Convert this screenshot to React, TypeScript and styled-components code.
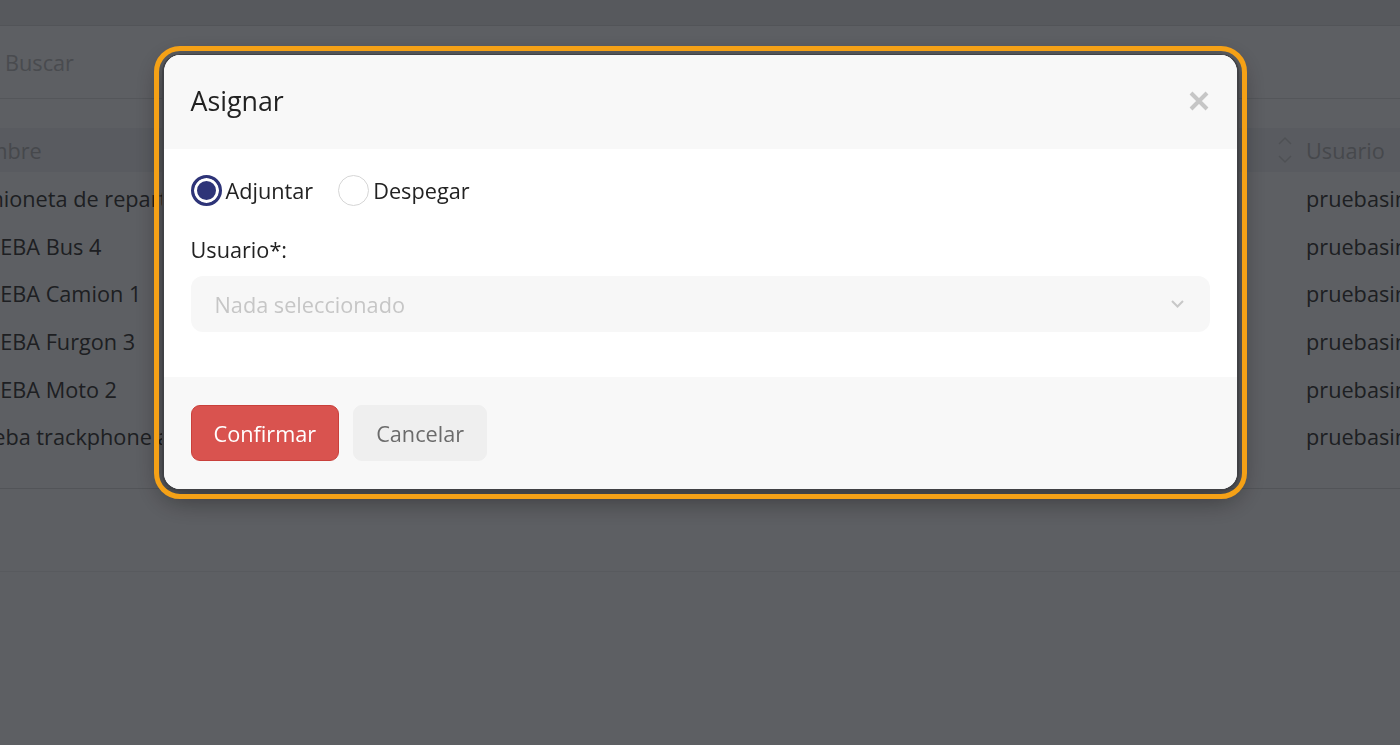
import React from 'react';
import styled, { createGlobalStyle } from 'styled-components';

const GlobalStyle = createGlobalStyle`
  html, body {
    margin: 0;
    padding: 0;
    height: 100%;
    overflow: hidden;
    background: #e9edf7;
    font-family: 'Open Sans', 'Liberation Sans', sans-serif;
  }
  #root {
    height: 100%;
  }
`;

const vehicles = [
  'Camioneta de reparto',
  'PRUEBA Bus 4',
  'PRUEBA Camion 1',
  'PRUEBA Furgon 3',
  'PRUEBA Moto 2',
  'Prueba trackphone android',
];

const Page = styled.div`
  height: 100%;
  display: flex;
  flex-direction: column;
  overflow: hidden;
  background: #e9edf7;
`;

const TopBar = styled.div`
  height: 25px;
  flex-shrink: 0;
  background: #d9dee8;
  border-bottom: 1px solid #cdd2dc;
`;

// the list is scrolled sideways, so its first column starts off screen
const Sheet = styled.div`
  margin-left: -71px;
  width: calc(100% + 71px);
  display: flex;
  flex-direction: column;
`;

const SearchRow = styled.div`
  height: 72px;
  display: flex;
  align-items: center;
  padding-left: 76px;
  border-bottom: 1px solid #d3d8e2;
  font-size: 21.7px;
  color: #b6bbc5;
`;

const TableGrid = styled.div`
  margin-top: 29px;
  display: grid;
  grid-template-columns: 1348px 1fr;
  padding-bottom: 27px;
  border-bottom: 1px solid #cdd2dc;
`;

const HeadCell = styled.div`
  height: 44px;
  margin-bottom: 3px;
  display: flex;
  align-items: center;
  gap: 13px;
  background: #dfe4f0;
  color: #afb4be;
  font-size: 21.7px;
  white-space: nowrap;
`;

const Cell = styled.div`
  height: 47.6px;
  display: flex;
  align-items: center;
  padding-left: 29px;
  font-size: 21.7px;
  color: #4b4e55;
  white-space: nowrap;
  overflow: hidden;
`;

const Pager = styled.div`
  height: 82px;
  border-bottom: 1px solid #dde2ec;
`;

const SortIcon = () => (
  <svg width="16" height="28" viewBox="0 0 16 28" fill="none" stroke="#c3c8d2" strokeWidth="1.5">
    <path d="M2 8 L8 2 L14 8" />
    <path d="M2 20 L8 26 L14 20" />
  </svg>
);

const Backdrop = styled.div`
  position: fixed;
  inset: 0;
  background: rgba(0, 0, 0, 0.6);
  display: flex;
  justify-content: center;
  align-items: flex-start;
  padding-top: 54px;
`;

const Dialog = styled.div`
  width: 1077px;
  box-sizing: border-box;
  border: 2px solid #404145;
  border-top-width: 1px;
  border-radius: 18px;
  outline: 5px solid #f5a116;
  outline-offset: 3px;
  overflow: hidden;
  background: #fff;
  box-shadow: 0 8px 28px rgba(0, 0, 0, 0.45);
  color: #222;
`;

const Header = styled.div`
  height: 94px;
  box-sizing: border-box;
  display: flex;
  align-items: center;
  justify-content: space-between;
  padding: 0 27px 3px;
  background: #f8f8f8;
`;

const Title = styled.h4`
  margin: 0;
  font-size: 26.8px;
  font-weight: 400;
  color: #222;
`;

const CloseButton = styled.button`
  border: 0;
  background: none;
  padding: 0;
  width: 22px;
  height: 22px;
  display: grid;
  place-items: center;
  cursor: pointer;
`;

const Body = styled.div`
  padding: 24px 27px 45px;
  display: flex;
  flex-direction: column;
`;

const RadioGroup = styled.div`
  display: flex;
  align-items: center;
  gap: 25px;
  height: 34px;
`;

const RadioLabel = styled.label`
  display: flex;
  align-items: center;
  gap: 4px;
  font-size: 21.7px;
  color: #222;
  cursor: pointer;
`;

const RadioDot = styled.span<{ $checked?: boolean }>`
  width: 31px;
  height: 31px;
  box-sizing: border-box;
  border-radius: 50%;
  border: ${(p) => (p.$checked ? '3px solid #2e3478' : '1.5px solid #d6d6d6')};
  background: ${(p) => (p.$checked ? '#2e3478' : '#fff')};
  box-shadow: ${(p) => (p.$checked ? 'inset 0 0 0 3px #fff' : 'none')};
`;

const FieldLabel = styled.div`
  margin-top: 29px;
  font-size: 21.7px;
  color: #222;
  line-height: 28px;
`;

const Select = styled.div`
  margin-top: 12px;
  height: 56px;
  border-radius: 12px;
  background: #f7f7f7;
  display: flex;
  align-items: center;
  justify-content: space-between;
  padding: 0 26px 0 24px;
  font-size: 21.7px;
  color: #c6c6c6;
`;

const Footer = styled.div`
  height: 112px;
  box-sizing: border-box;
  display: flex;
  align-items: center;
  gap: 14px;
  padding: 0 27px;
  background: #f8f8f8;
`;

const Button = styled.button<{ $primary?: boolean }>`
  height: 56px;
  padding: 0 22px;
  border-radius: 9px;
  font-family: inherit;
  font-size: 21.7px;
  cursor: pointer;
  border: 1px solid ${(p) => (p.$primary ? '#c9403b' : '#efefef')};
  background: ${(p) => (p.$primary ? '#d9534f' : '#efefef')};
  color: ${(p) => (p.$primary ? '#fff' : '#6b6b6b')};
`;

export default function App() {
  const [mode, setMode] = React.useState<'adjuntar' | 'despegar'>('adjuntar');

  return (
    <>
      <GlobalStyle />
      <Page>
        <TopBar />
        <Sheet>
          <SearchRow>Buscar</SearchRow>
          <TableGrid>
            <HeadCell>
              <SortIcon />
              Nombre
            </HeadCell>
            <HeadCell>
              <SortIcon />
              Usuario
            </HeadCell>
            {vehicles.map((name) => (
              <React.Fragment key={name}>
                <Cell>{name}</Cell>
                <Cell>pruebasinergia</Cell>
              </React.Fragment>
            ))}
          </TableGrid>
          <Pager />
        </Sheet>
      </Page>

      <Backdrop>
        <Dialog>
          <Header>
            <Title>Asignar</Title>
            <CloseButton aria-label="Cerrar">
              <svg width="20" height="20" viewBox="0 0 20 20" stroke="#c6c6c6" strokeWidth="4">
                <path d="M2 2 L18 18 M18 2 L2 18" />
              </svg>
            </CloseButton>
          </Header>
          <Body>
            <RadioGroup>
              <RadioLabel onClick={() => setMode('adjuntar')}>
                <RadioDot $checked={mode === 'adjuntar'} />
                Adjuntar
              </RadioLabel>
              <RadioLabel onClick={() => setMode('despegar')}>
                <RadioDot $checked={mode === 'despegar'} />
                Despegar
              </RadioLabel>
            </RadioGroup>
            <FieldLabel>Usuario*:</FieldLabel>
            <Select>
              Nada seleccionado
              <svg width="13" height="8" viewBox="0 0 13 8" fill="none" stroke="#c8c8c8" strokeWidth="2">
                <path d="M1 1 L6.5 6.5 L12 1" />
              </svg>
            </Select>
          </Body>
          <Footer>
            <Button $primary>Confirmar</Button>
            <Button>Cancelar</Button>
          </Footer>
        </Dialog>
      </Backdrop>
    </>
  );
}
